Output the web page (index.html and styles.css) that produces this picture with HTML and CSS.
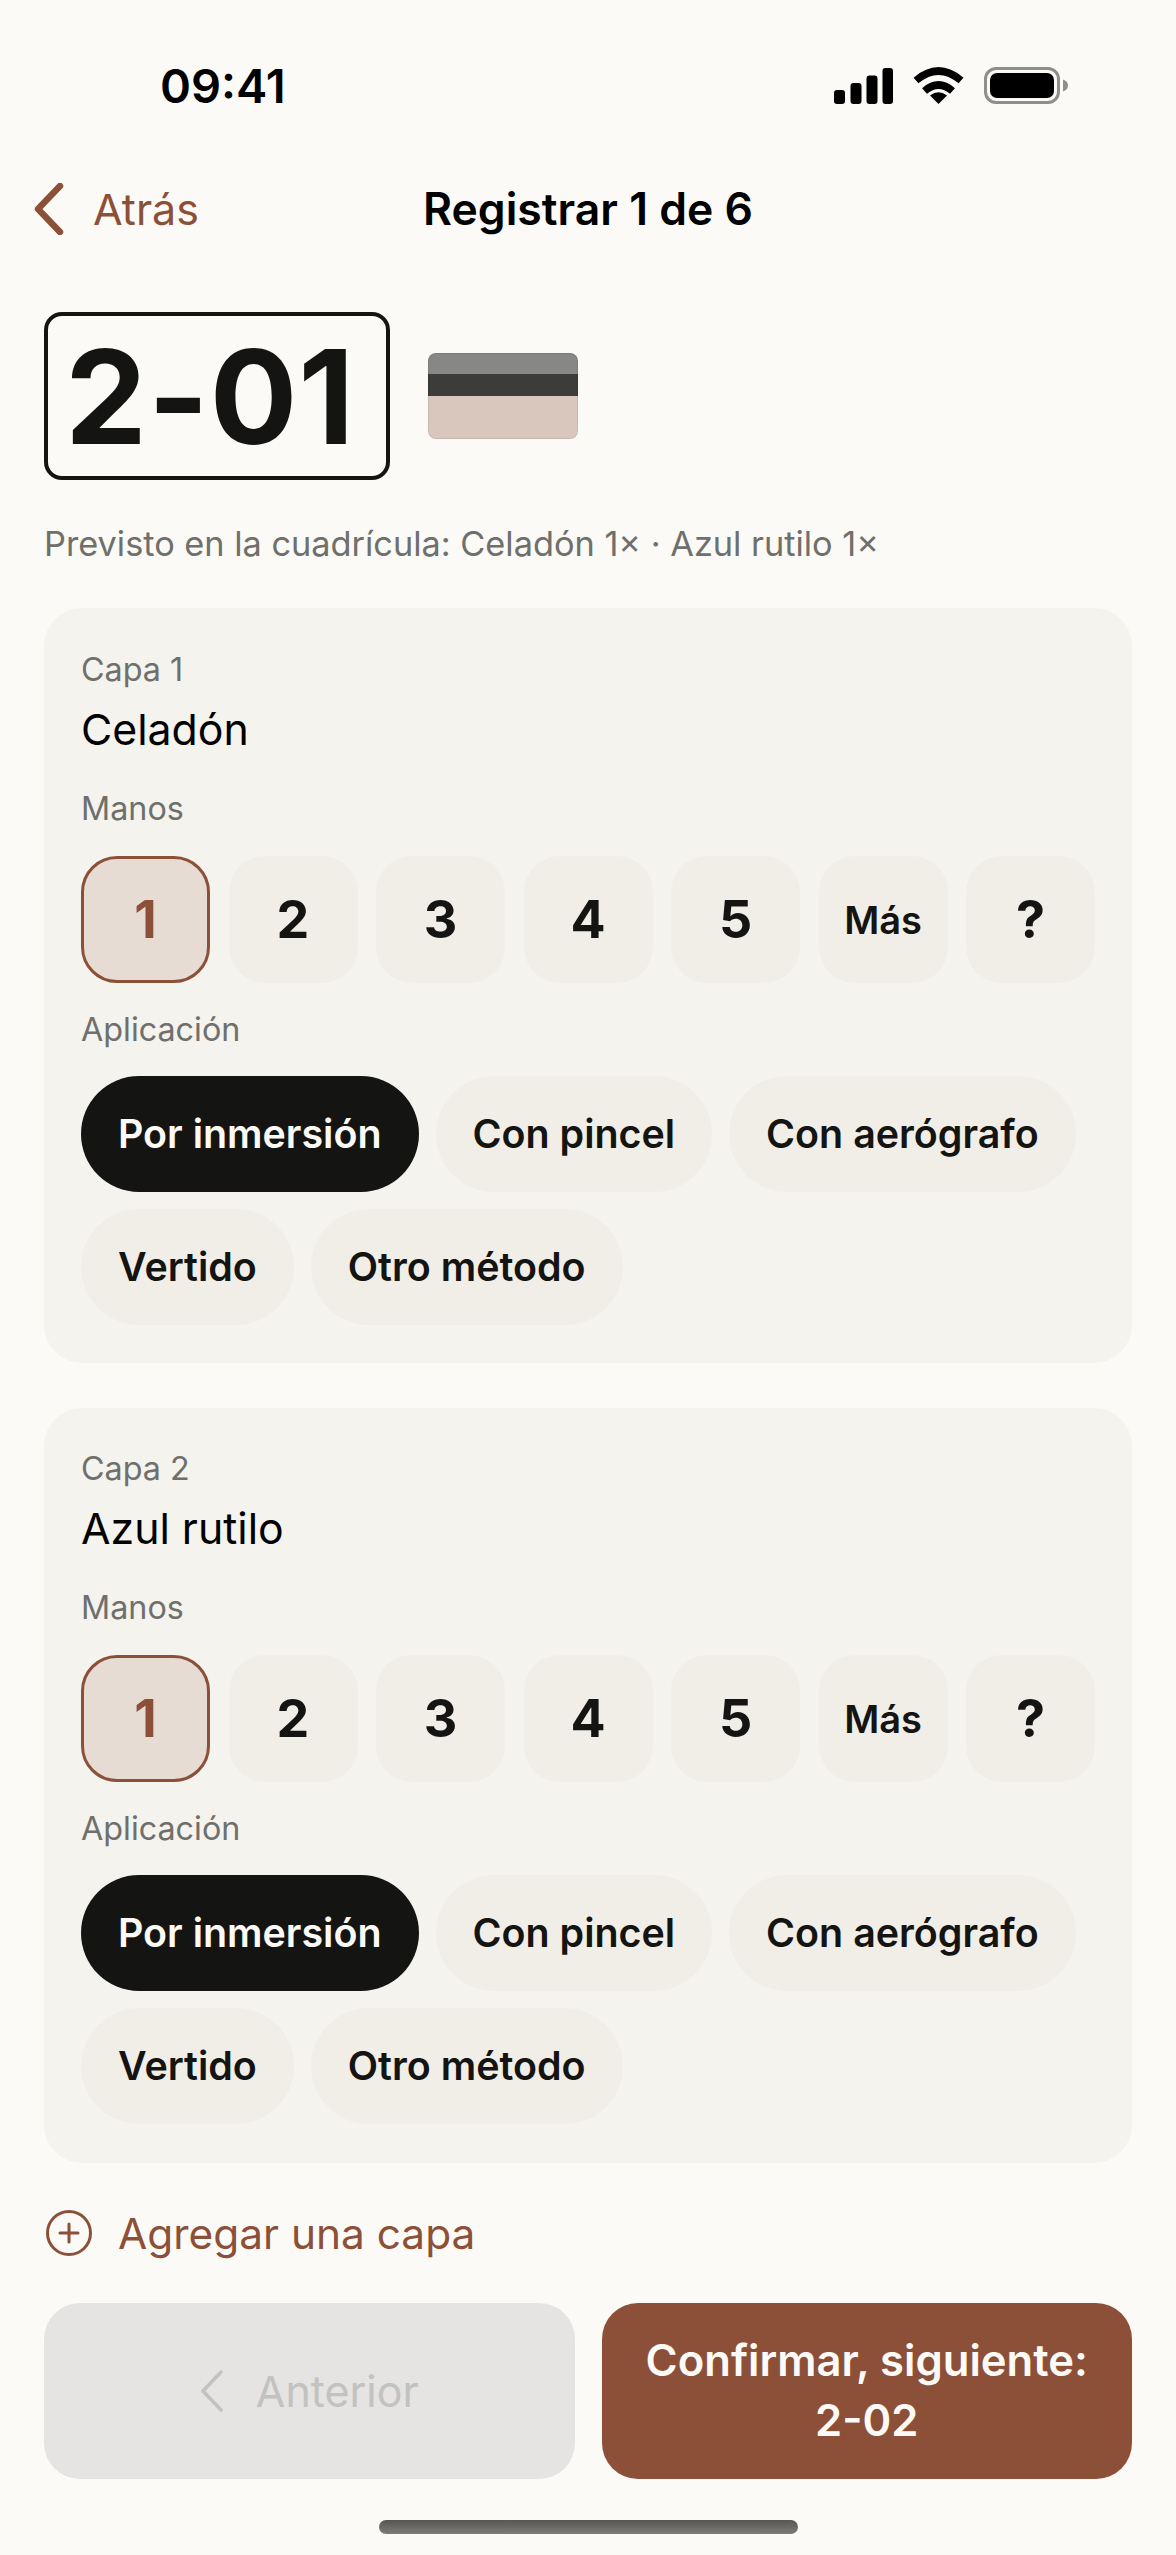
FILE: index.html
```html
<!DOCTYPE html>
<html lang="es">
<head>
    <meta charset="UTF-8">
    <meta name="viewport" content="width=device-width, initial-scale=1.0">
    <title>Registrar 1 de 6</title>
    <link rel="stylesheet" href="styles.css">
</head>
<body>

    <div class="status-bar">
        <span class="time">09:41</span>
        <div class="status-icons">
            <svg class="signal" width="59" height="36" viewBox="0 0 59 36">
                <rect x="0" y="22" width="11" height="14" rx="3"/>
                <rect x="16.500" y="15" width="11" height="21" rx="3"/>
                <rect x="32.500" y="7.500" width="11" height="28.500" rx="3"/>
                <rect x="48.500" y="0" width="10.500" height="36" rx="3"/>
            </svg>
            <svg class="wifi" width="51" height="37" viewBox="0 0 51 37">
                <path d="M3 13.500Q25.500 -5.500 48 13.500" fill="none" stroke="#000" stroke-width="7.500"/>
                <path d="M11.500 24Q25.500 12 39.500 24" fill="none" stroke="#000" stroke-width="7.500"/>
                <path d="M17 28.500Q25.500 22 34 28.500L25.500 37Z"/>
            </svg>
            <svg class="battery" width="84" height="37" viewBox="0 0 84 37">
                <rect x="1.500" y="1.500" width="73" height="34" rx="10.500" fill="none" stroke="#8e8e8c" stroke-width="3"/>
                <rect x="6" y="6" width="64" height="25" rx="7"/>
                <path d="M79 12.500C82 13.500 84 15.500 84 18.500C84 21.500 82 23.500 79 24.500Z" fill="#8e8e8c"/>
            </svg>
        </div>
    </div>

    <div class="nav">
        <div class="back">
            <svg width="30" height="52" viewBox="0 0 30 52">
                <path d="M26 3L4 26L26 49" fill="none" stroke="#8c5039" stroke-width="6.500" stroke-linecap="round" stroke-linejoin="round"/>
            </svg>
            <span>Atrás</span>
        </div>
        <div class="nav-title">Registrar 1 de 6</div>
    </div>

    <div class="plate-row">
        <div class="plate">2-01</div>
        <div class="swatch">
            <div class="stripe-grey"></div>
            <div class="stripe-dark"></div>
            <div class="stripe-light"></div>
        </div>
    </div>

    <p class="planned">Previsto en la cuadrícula: Celadón 1× · Azul rutilo 1×</p>

    <div class="layer">
        <div class="layer-num">Capa 1</div>
        <div class="layer-name">Celadón</div>
        <div class="field-label">Manos</div>
        <div class="coats">
            <button class="coat selected">1</button>
            <button class="coat">2</button>
            <button class="coat">3</button>
            <button class="coat">4</button>
            <button class="coat">5</button>
            <button class="coat coat-more">Más</button>
            <button class="coat">?</button>
        </div>
        <div class="field-label field-label-method">Aplicación</div>
        <div class="methods">
            <button class="method selected">Por inmersión</button>
            <button class="method">Con pincel</button>
            <button class="method">Con aerógrafo</button>
            <button class="method">Vertido</button>
            <button class="method">Otro método</button>
        </div>
    </div>

    <div class="layer">
        <div class="layer-num">Capa 2</div>
        <div class="layer-name">Azul rutilo</div>
        <div class="field-label">Manos</div>
        <div class="coats">
            <button class="coat selected">1</button>
            <button class="coat">2</button>
            <button class="coat">3</button>
            <button class="coat">4</button>
            <button class="coat">5</button>
            <button class="coat coat-more">Más</button>
            <button class="coat">?</button>
        </div>
        <div class="field-label field-label-method">Aplicación</div>
        <div class="methods">
            <button class="method selected">Por inmersión</button>
            <button class="method">Con pincel</button>
            <button class="method">Con aerógrafo</button>
            <button class="method">Vertido</button>
            <button class="method">Otro método</button>
        </div>
    </div>

    <div class="add-layer">
        <svg width="46" height="46" viewBox="0 0 46 46">
            <circle cx="23" cy="23" r="21.500" fill="none" stroke="#8c5039" stroke-width="3"/>
            <path d="M23 14V32M14 23H32" fill="none" stroke="#8c5039" stroke-width="3" stroke-linecap="round"/>
        </svg>
        <span>Agregar una capa</span>
    </div>

    <div class="actions">
        <button class="btn-prev">
            <svg width="24" height="42" viewBox="0 0 24 42">
                <path d="M21 2L3 21L21 40" fill="none" stroke="#c2c2c0" stroke-width="3.500" stroke-linecap="round" stroke-linejoin="round"/>
            </svg>
            <span>Anterior</span>
        </button>
        <button class="btn-next">Confirmar, siguiente:<br>2-02</button>
    </div>

    <div class="home-bar"></div>

</body>
</html>
```

FILE: styles.css
```css
* {
    box-sizing: border-box;
}
html, body {
    margin: 0;
    padding: 0;
}
body {
    width: 1176px;
    height: 2555px;
    overflow: hidden;
    background-color: #fbfaf6;
    color: #141412;
    font-family: Inter, "Liberation Sans", sans-serif;
}
button {
    border: none;
    font-family: inherit;
    cursor: pointer;
}

/* status bar */
.status-bar {
    height: 174px;
    display: flex;
    align-items: center;
    justify-content: space-between;
    padding: 0 108px 3px 160px;
}
.time {
    font-size: 47px;
    font-weight: 600;
    color: #000;
}
.status-icons {
    display: flex;
    align-items: center;
    gap: 20px;
}

/* nav */
.nav {
    position: relative;
    height: 70px;
    display: flex;
    align-items: center;
    justify-content: center;
}
.back {
    position: absolute;
    left: 34px;
    top: 9px;
    display: flex;
    align-items: center;
    gap: 29px;
    font-size: 43px;
    color: #8c5039;
}
.nav-title {
    font-size: 44.500px;
    font-weight: 600;
    color: #000;
}

/* plate */
.plate-row {
    margin-top: 68px;
    padding-left: 44px;
    display: flex;
    align-items: center;
    gap: 38px;
}
.plate {
    width: 346px;
    height: 168px;
    padding-left: 17px;
    border: 4px solid #141412;
    border-radius: 18px;
    display: flex;
    align-items: center;
    font-size: 130px;
    font-weight: 700;
    letter-spacing: 1px;
}
.swatch {
    position: relative;
    width: 150px;
    height: 86px;
    border-radius: 8px;
    overflow: hidden;
    display: flex;
    flex-direction: column;
}
.swatch::after {
    content: "";
    position: absolute;
    inset: 0;
    border: 1.500px solid rgba(0, 0, 0, 0.08);
    border-radius: 8px;
}
.stripe-grey {
    height: 21px;
    background-color: #878785;
}
.stripe-dark {
    height: 22px;
    background-color: #3c3c3a;
}
.stripe-light {
    flex: 1;
    background-color: #d9c7bd;
}
.planned {
    margin: 39px 0 0;
    padding-left: 44px;
    font-size: 34.300px;
    line-height: 50px;
    color: #6f6f6b;
}

/* layer cards */
.layer {
    width: 1088px;
    height: 755px;
    margin: 39px 0 0 44px;
    padding: 40px 37px 0;
    background-color: #f4f3ee;
    border-radius: 38px;
}
.layer + .layer {
    margin-top: 45px;
    padding-top: 39px;
}
.layer-num {
    font-size: 32.300px;
    line-height: 44px;
    color: #6f6f6b;
}
.layer-name {
    margin-top: 10px;
    font-size: 42.800px;
    line-height: 56px;
    color: #000;
}
.field-label {
    margin-top: 29px;
    font-size: 32.300px;
    line-height: 44px;
    color: #6f6f6b;
}
.field-label-method {
    margin-top: 25px;
}
.coats {
    margin-top: 25px;
    display: grid;
    grid-template-columns: repeat(7, 1fr);
    gap: 18.500px;
}
.coat {
    height: 127px;
    padding: 0;
    border-radius: 36px;
    background-color: #f1eee8;
    color: #141412;
    font-size: 52px;
    font-weight: 700;
}
.coat-more {
    font-size: 38px;
    font-weight: 600;
}
.coat.selected {
    background-color: #e6dcd4;
    border: 3.500px solid #8c5039;
    color: #8c5039;
}
.methods {
    margin-top: 24px;
    display: flex;
    flex-wrap: wrap;
    gap: 17px;
}
.method {
    height: 116px;
    padding: 0 37px;
    border-radius: 58px;
    background-color: #f1eee8;
    color: #141412;
    font-size: 39.400px;
    font-weight: 600;
}
.method.selected {
    background-color: #141412;
    color: #fbfaf6;
}

/* bottom */
.add-layer {
    margin-top: 45px;
    padding-left: 46px;
    height: 50px;
    display: flex;
    align-items: center;
    gap: 26px;
    font-size: 42.400px;
    color: #8c5039;
}
.actions {
    margin-top: 45px;
    padding: 0 44px;
    display: grid;
    grid-template-columns: 1fr 1fr;
    gap: 27px;
}
.btn-prev, .btn-next {
    height: 176px;
    border-radius: 36px;
    font-size: 43px;
}
.btn-prev {
    display: flex;
    align-items: center;
    justify-content: center;
    gap: 32px;
    background-color: #e5e4e2;
    color: #c2c2c0;
}
.btn-next {
    padding: 0;
    background-color: #8c5039;
    color: #fbfaf6;
    font-size: 43.600px;
    font-weight: 600;
    line-height: 60px;
}
.home-bar {
    width: 419px;
    height: 14px;
    margin: 41px auto 0;
    border-radius: 7px;
    background: linear-gradient(#565654, #7c7c7a);
}
```
